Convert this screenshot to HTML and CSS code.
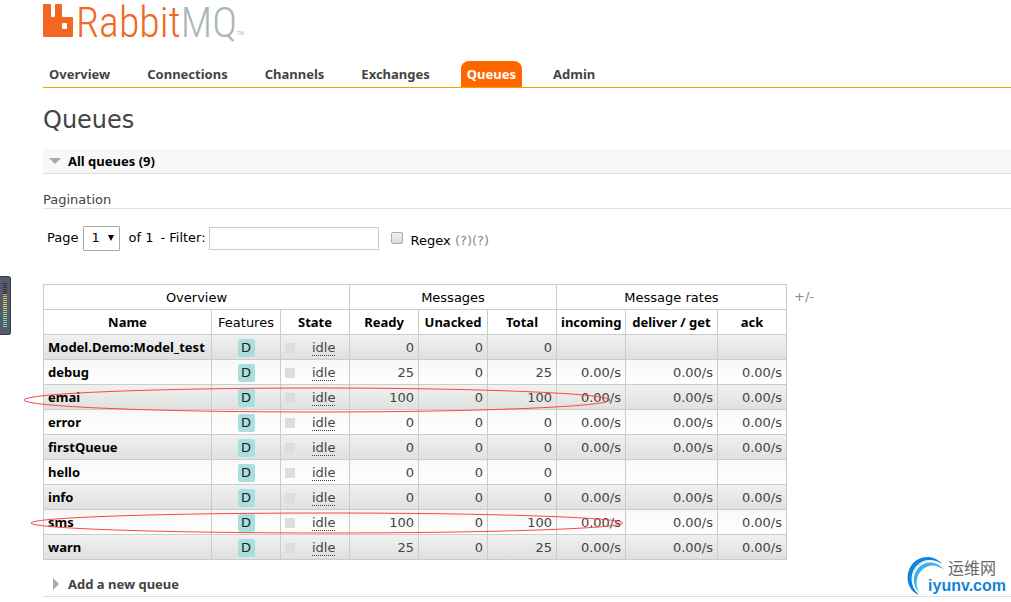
FILE: index.html
```html
<!DOCTYPE html>
<html lang="en">
<head>
   <meta charset="UTF-8">
   <title>RabbitMQ Management</title>
   <link rel="stylesheet" href="styles.css">
</head>
<body>
<aside class="meter">
   <div class="meter-off"></div>
   <div class="meter-on"></div>
</aside>

<div class="page">
   <header>
      <a class="logo" href="#">
         <svg class="logo-mark" width="30" height="34" viewBox="0 0 30 34">
            <path fill="#f26822" fill-rule="evenodd" d="M1 0h6a1 1 0 0 1 1 1v11a1 1 0 0 0 1 1h2a1 1 0 0 0 1-1V1a1 1 0 0 1 1-1h5a1 1 0 0 1 1 1v11a1 1 0 0 0 1 1h9a1 1 0 0 1 1 1v18a1 1 0 0 1-1 1H1a1 1 0 0 1-1-1V1a1 1 0 0 1 1-1zM19 20v4a1 1 0 0 0 1 1h3a1 1 0 0 0 1-1v-4a1 1 0 0 0-1-1h-3a1 1 0 0 0-1 1z"/>
         </svg>
         <span class="logo-rabbit">Rabbit</span><span class="logo-mq">MQ</span><span class="logo-tm">TM</span>
      </a>
      <nav>
         <ul class="tabs">
            <li><a href="#">Overview</a></li>
            <li><a href="#">Connections</a></li>
            <li><a href="#">Channels</a></li>
            <li><a href="#">Exchanges</a></li>
            <li><a class="selected" href="#">Queues</a></li>
            <li><a href="#">Admin</a></li>
         </ul>
      </nav>
   </header>

   <main>
      <h1>Queues</h1>
      <h2 class="section open">All queues (9)</h2>
      <h3>Pagination</h3>

      <form class="filter">
         <label for="page">Page</label>
         <span class="select-wrap">
            <select id="page"><option>1</option></select>
         </span>
         <span class="of">of 1</span>
         <label class="filter-label" for="filter">- Filter:</label>
         <input type="text" id="filter">
         <input type="checkbox" id="regex">
         <div class="regex">
            <label for="regex">Regex</label>
            <span class="help"><a href="#">(?)</a><a href="#">(?)</a></span>
         </div>
      </form>

      <div class="queues">
         <div class="list-wrap">
            <table class="list">
               <colgroup>
                  <col class="wide"><col><col><col><col><col><col><col class="mid"><col>
               </colgroup>
               <thead>
                  <tr class="groups">
                     <th colspan="3">Overview</th>
                     <th colspan="3">Messages</th>
                     <th colspan="3">Message rates</th>
                  </tr>
                  <tr>
                     <th>Name</th>
                     <th class="plain">Features</th>
                     <th>State</th>
                     <th>Ready</th>
                     <th>Unacked</th>
                     <th>Total</th>
                     <th>incoming</th>
                     <th>deliver / get</th>
                     <th>ack</th>
                  </tr>
               </thead>
               <tbody id="rows"></tbody>
            </table>
            <svg class="mark mark-email" viewBox="0 0 588 26"><ellipse cx="294" cy="13" rx="293" ry="12"/></svg>
            <svg class="mark mark-sms" viewBox="0 0 594 22"><ellipse cx="297" cy="11" rx="296" ry="10"/></svg>
         </div>
         <a class="columns" href="#">+/-</a>
      </div>

      <h2 class="section closed">Add a new queue</h2>
   </main>
</div>

<div class="watermark">
   <svg width="40" height="42" viewBox="0 0 40 42">
      <path fill="#1583d8" d="M35 9C27-1 11 0 4 11c-7 11-3 25 8 29C4 32 3 21 9 13 15 5 26 3 35 9z"/>
      <path fill="#39b4ea" d="M37 15C31 6 19 5 12 12 5 19 5 30 12 38 8 29 9 21 15 15c6-6 15-6 22 0z"/>
      <path fill="none" stroke="#fff" d="M36 11C27 3 15 4 9 12 3 20 4 31 11 38"/>
   </svg>
   <div class="mark-text">
      <span class="mark-cn">运维网</span>
      <span class="mark-en">iyunv.com</span>
   </div>
</div>

<script>
    const queues = [
        ["Model.Demo:Model_test", 0, false],
        ["debug", 25, true],
        ["emai", 100, true],
        ["error", 0, true],
        ["firstQueue", 0, true],
        ["hello", 0, false],
        ["info", 0, true],
        ["sms", 100, true],
        ["warn", 25, true]
    ];
    const rows = document.querySelector("#rows");

    queues.forEach(function([name, ready, hasRates]) {
        const rate = hasRates ? "0.00/s" : ""; // no rates for queues without traffic
        rows.innerHTML += `<tr>
            <td class="name"><a href="#">${name}</a></td>
            <td class="c"><abbr class="feature">D</abbr></td>
            <td><div class="state"><abbr>idle</abbr></div></td>
            <td class="r">${ready}</td>
            <td class="r">0</td>
            <td class="r">${ready}</td>
            <td class="r">${rate}</td>
            <td class="r">${rate}</td>
            <td class="r">${rate}</td>
        </tr>`;
    });
</script>
</body>
</html>
```
FILE: styles.css
```css
body {
   font: 13px/16px "DejaVu Sans", Verdana, sans-serif;
   color: #444;
   margin: 0;
   background: #fff;
   overflow: hidden;
}

a {
   color: inherit;
   text-decoration: none;
}

.page {
   padding-left: 43px;
}

.logo {
   display: flex;
   height: 61px;
   font: 300 42px/46px "Roboto Condensed", "Liberation Sans Narrow", sans-serif;
}

.logo-mark {
   margin: 4px 3px 0 0;
}

.logo-rabbit {
   color: #f26822;
}

.logo-mq {
   color: #a9b8b2;
}

.logo-tm {
   align-self: flex-start;
   margin-top: 30px;
   font: 5px/6px "Liberation Sans", sans-serif;
   color: #a9b8b2;
}

.tabs {
   display: flex;
   gap: 25px;
   margin: 0;
   padding: 0;
   list-style: none;
   border-bottom: 1px solid #f90;
}

.tabs a {
   display: block;
   padding: 5px 6px;
   font: bold 13px/16px "Noto Sans", sans-serif;
   border-radius: 8px 8px 0 0;
}

.tabs .selected {
   background: #f60;
   color: #fff;
}

h1 {
   margin: 17px 0 13px;
   font-size: 24px;
   line-height: 31px;
   font-weight: normal;
}

.section {
   display: flex;
   align-items: center;
   height: 24px;
   margin: 0;
   padding-left: 6px;
   font: bold 13px/24px "Noto Sans", sans-serif;
   border-bottom: 1px solid #ddd;
}

.section::before {
   content: "";
   border: 6px solid transparent;
}

.open {
   color: #000;
   background: #f8f8f8;
}

.open::before {
   border-top-color: #aaa;
   border-bottom: 0;
   margin-right: 7px;
}

.closed {
   margin-top: 12px;
}

.closed::before {
   border-left-color: #aaa;
   border-right: 0;
   margin: 0 9px 0 4px;
}

h3 {
   margin: 17px 0 0;
   font-size: 13px;
   line-height: 17px;
   font-weight: normal;
   border-bottom: 1px solid #e4e4e4;
}

.filter {
   display: flex;
   align-items: center;
   height: 26px;
   margin: 16px 0 33px;
   padding-left: 4px;
   color: #000;
}

.select-wrap {
   position: relative;
   margin-left: 5px;
}

.select-wrap::after {
   content: "";
   position: absolute;
   right: 6px;
   top: 9px;
   border: 3px solid transparent;
   border-top: 6px solid #000;
   border-bottom: 0;
   pointer-events: none;
}

select {
   display: block;
   appearance: none;
   width: 37px;
   height: 25px;
   padding: 0 7px;
   font: inherit;
   color: #000;
   background: #fff;
   border: 1px solid #aaa;
   border-radius: 1px;
}

.of {
   margin: 0 7px 0 8px;
}

.filter-label {
   margin-right: 3px;
}

input[type="text"] {
   box-sizing: border-box;
   width: 170px;
   height: 23px;
   border: 1px solid #ccc;
   font: inherit;
}

input[type="checkbox"] {
   appearance: none;
   width: 12px;
   height: 12px;
   margin: 0 8px 0 12px;
   border: 1px solid #aaa;
   border-radius: 2px;
   background: linear-gradient(#eee, #ddd);
}

.regex {
   padding-top: 5px;
}

.help {
   color: #888;
}

.queues {
   display: flex;
}

.list-wrap {
   position: relative;
}

.list {
   width: 744px;
   table-layout: fixed;
   border-collapse: collapse;
}

.list col {
   width: 69px;
}

.list .wide {
   width: 168px;
}

.list .mid {
   width: 92px;
}

.list th,
.list td {
   height: 22px;
   padding: 2px 4px 0;
   border: 1px solid #ccc;
   white-space: nowrap;
}

.list th,
.list .name {
   padding: 1px 4px;
   font: bold 13px/16px "Noto Sans", sans-serif;
   color: #000;
}

.list .groups th,
.list .plain {
   padding: 2px 4px 0;
   font: inherit;
}

.list tbody tr {
   background: linear-gradient(#f8f8f8, #fff);
}

.list tbody tr:nth-child(odd) {
   background: linear-gradient(#f0f0f0, #e0e0e0);
}

.c {
   text-align: center;
}

.r {
   text-align: right;
}

.feature {
   display: inline-block;
   width: 17px;
   line-height: 18px;
   color: #222;
   background: #aadfdf;
   border-radius: 2px;
}

.state {
   display: flex;
   align-items: center;
   gap: 17px;
}

.state::before {
   content: "";
   width: 10px;
   height: 10px;
   background: #ddd;
}

.state abbr {
   line-height: 15px;
   border-bottom: 1px dotted #444;
}

.columns {
   margin: 5px 0 0 7px;
   color: #888;
}

/* hand-drawn rings round the two queues */
.mark {
   position: absolute;
   fill: none;
   stroke: #f44;
}

.mark-email {
   left: -20px;
   top: 103px;
   width: 588px;
   height: 26px;
}

.mark-sms {
   left: -13px;
   top: 228px;
   width: 594px;
   height: 22px;
}

.meter {
   position: absolute;
   left: 0;
   top: 276px;
   width: 10px;
   height: 57px;
   border: 1px solid #353a45;
   border-left: 0;
   border-radius: 0 3px 3px 0;
   background: #555b6b;
}

.meter-off,
.meter-on {
   width: 4px;
   margin-left: 3px;
}

.meter-off {
   height: 11px;
   margin-top: 6px;
   background: repeating-linear-gradient(#2c303a 0 1px, transparent 1px 2px);
}

.meter-on {
   height: 34px;
   background: repeating-linear-gradient(transparent 0 1px, #555b6b 1px 2px), linear-gradient(#f0a848, #d8d860, #80e090, #40e0d8);
}

.watermark {
   position: absolute;
   right: 4px;
   bottom: 5px;
   width: 100px;
   height: 42px;
}

.mark-text {
   position: absolute;
   top: 3px;
   right: 1px;
   display: flex;
   flex-direction: column;
   align-items: flex-end;
   white-space: nowrap;
}

.mark-cn {
   margin-right: 10px;
   font: 16px/18px "Noto Sans CJK SC", sans-serif;
   color: #666;
}

.mark-en {
   font: bold 16px/20px "Liberation Sans", sans-serif;
   color: #1583d8;
}
```
